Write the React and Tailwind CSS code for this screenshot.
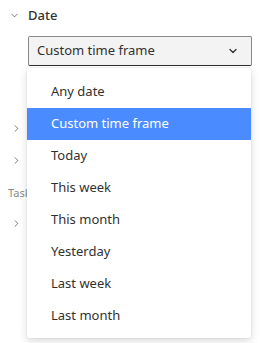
import { ChevronDown, ChevronRight } from 'lucide-react'

const options = [
  'Any date',
  'Custom time frame',
  'Today',
  'This week',
  'This month',
  'Yesterday',
  'Last week',
  'Last month',
]

export default function App() {
  const selected = 'Custom time frame'
  return (
    <div
      className="relative w-[262px] h-[343px] overflow-hidden bg-white text-[#323130]"
      style={{ fontFamily: '"Noto Sans", "Open Sans", sans-serif' }}
    >
      <div className="flex items-center h-[30px] pt-[1px]">
        <div className="w-[28px] flex justify-center pl-[1px]">
          <ChevronDown size={11} strokeWidth={1.4} className="text-[#323130]" />
        </div>
        <span className="text-[13px] font-medium">Date</span>
      </div>

      <div className="pl-[28px] pr-[10px] mt-[6px]">
        <div className="flex items-center justify-between h-[30px] px-[8px] bg-[#f3f3f3] border border-[#8a8886] border-b-[#323130] rounded-[2px]">
          <span className="text-[13px]">{selected}</span>
          <ChevronDown size={12} strokeWidth={2.5} className="mr-[4px]" />
        </div>
      </div>

      <div className="flex flex-col text-[#323130]">
        <div className="h-[46px]" />
        <div className="flex items-center h-[32px] pl-[11px]">
          <ChevronRight size={11} strokeWidth={1.4} />
        </div>
        <div className="flex items-center h-[32px] pl-[11px]">
          <ChevronRight size={11} strokeWidth={1.4} />
        </div>
        <div className="flex items-center h-[31px] pt-[3px] pl-[8px] text-[11px] text-[#8a8886]">Tasks</div>
        <div className="flex items-center h-[32px] pl-[11px]">
          <ChevronRight size={11} strokeWidth={1.4} />
        </div>
      </div>

      <div className="absolute left-[27px] top-[68px] w-[224px] h-[270px] bg-white rounded-[2px] shadow-[0_3px_8px_rgba(0,0,0,0.15),0_0_2px_rgba(0,0,0,0.1)] pt-[8px]">
        {options.map((o) => (
          <div
            key={o}
            className={`flex items-center h-[32px] pl-[24px] text-[13px] ${
              o === selected ? 'bg-[#4a8cff] text-white' : 'text-[#323130]'
            }`}
          >
            {o}
          </div>
        ))}
      </div>
    </div>
  )
}
